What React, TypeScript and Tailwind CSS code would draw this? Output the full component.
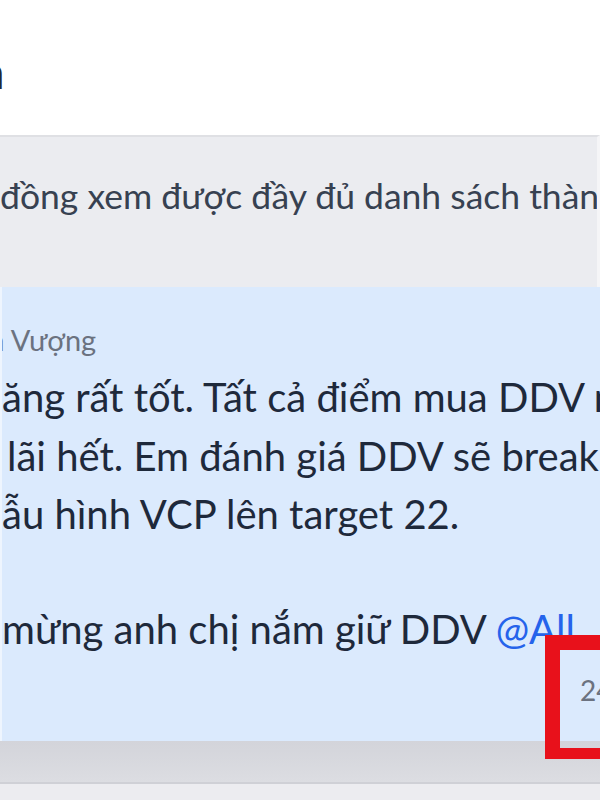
import React from 'react';

const lines = [
  'ăng rất tốt. Tất cả điểm mua DDV mới',
  'lãi hết. Em đánh giá DDV sẽ break đỉnh',
  'ẫu hình VCP lên target 22.',
];

const App: React.FC = () => {
  return (
    <div
      className="w-[600px] h-[800px] overflow-hidden bg-white flex flex-col relative"
      style={{ fontFamily: 'Lato, "Noto Sans", sans-serif' }}
    >
      {/* Header */}
      <div className="h-[135px] shrink-0 bg-white overflow-hidden">
        <div className="-ml-[21px] mt-[40px] text-[46px] leading-[64px] text-[#1f2937] whitespace-nowrap">n</div>
      </div>

      {/* Pinned notice */}
      <div className="h-[152px] shrink-0 bg-[#ebecf0] border-t-2 border-[#dfe0e4] border-r-[3px] border-r-[#f5f5f7] flex items-start overflow-hidden">
        <p className="mt-[34px] text-[35.5px] leading-[50px] text-[#374151] whitespace-nowrap">
          đồng xem được đầy đủ danh sách thành viên
        </p>
      </div>

      {/* Message bubble */}
      <div className="h-[454px] shrink-0 bg-[#dbeafd] border-l-2 border-l-[#eef5fe] overflow-hidden">
        <div className="pt-[35px]">
          <div className="-ml-[12px] text-[29px] leading-[36px] text-[#6b7280] whitespace-nowrap">a Vượng</div>
          <div className="mt-[10px] text-[40px] leading-[58.5px] text-[#1e293b] whitespace-nowrap">
            {lines.map((l, i) => (
              <div key={i} className={i === 1 ? 'pl-[5px]' : ''}>{l}</div>
            ))}
            <div className="h-[56px]" />
            <div>
              mừng anh chị nắm giữ DDV <span className="text-[#2563eb]">@All</span>
            </div>
          </div>
          <div className="flex justify-end mt-[14px]">
            <span className="text-[28px] leading-[36px] text-[#6b7280] -mr-[20px] w-[40px]">24</span>
          </div>
        </div>
      </div>

      {/* Input shadow area */}
      <div className="h-[41px] shrink-0 bg-gradient-to-b from-[#d3d4da] to-[#dcdde2]" />
      <div className="h-[2px] shrink-0 bg-[#cfd0d6]" />
      <div className="flex-1 bg-[#ececf0]" />

      {/* Highlight box */}
      <div className="absolute left-[545px] top-[635px] w-[80px] h-[124px] border-[15px] border-b-[11px] border-[#e8111b]" />
    </div>
  );
};

export default App;
